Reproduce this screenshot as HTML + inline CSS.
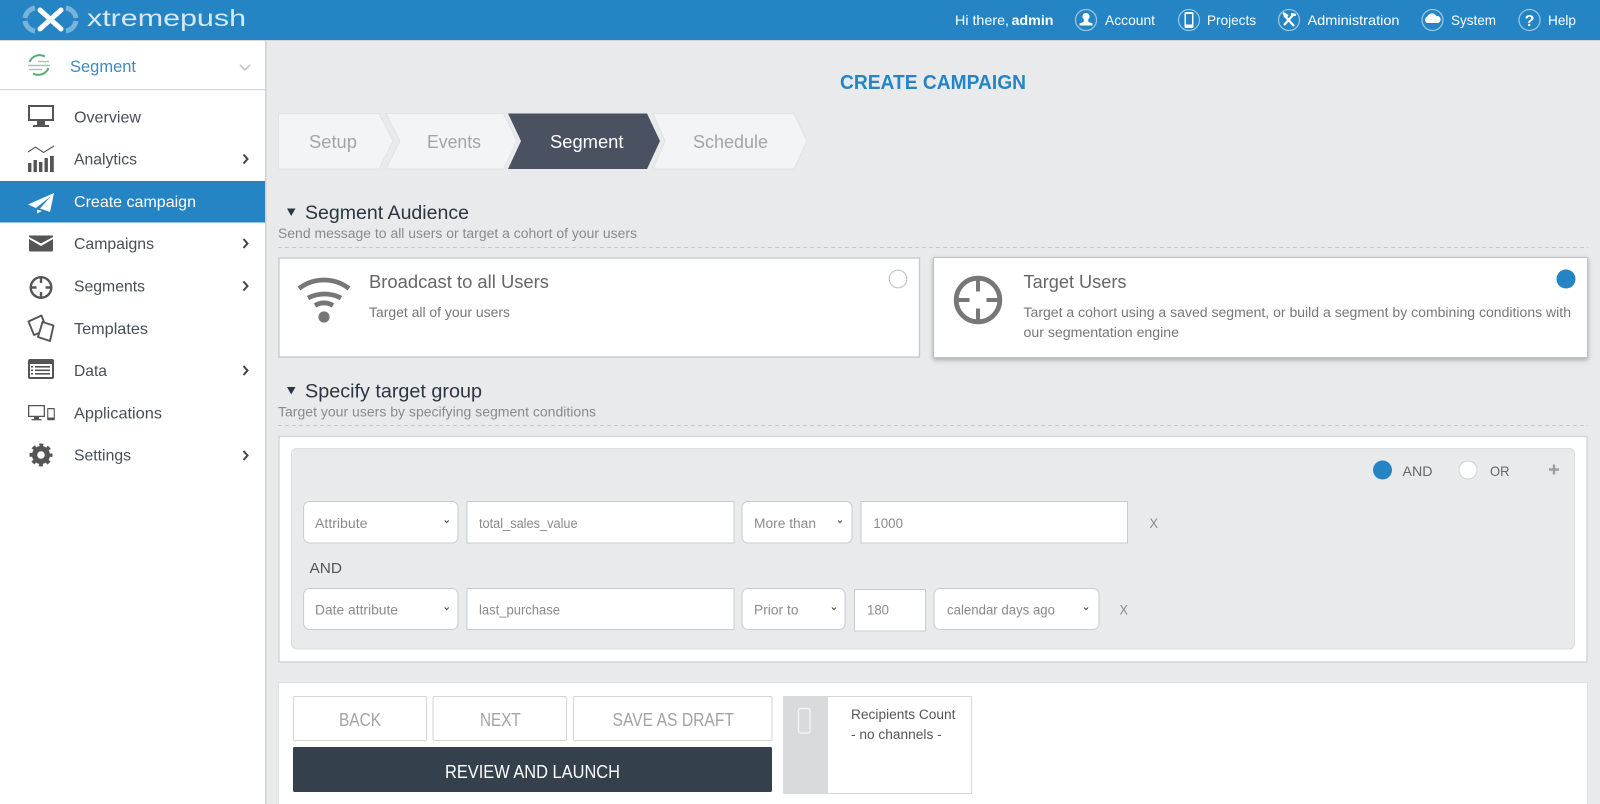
<!DOCTYPE html>
<html lang="en">
<head>
<meta charset="utf-8">
<title>Create Campaign - xtremepush</title>
<style>
html,body{margin:0;padding:0;width:1600px;height:804px;overflow:hidden;background:#e9eaec}
svg{display:block}
text{font-family:"Liberation Sans","DejaVu Sans",sans-serif}
.m{font-size:16px;fill:#484e56}
.h{font-size:14px;fill:#fff}
.f{font-size:13.5px;fill:#8a8a8a}
.b{font-size:18px;fill:#a3a3a3;font-weight:400}
.st{font-size:18.5px;fill:#a2a4a7}
</style>
</head>
<body>
<svg width="1600" height="804" viewBox="0 0 1600 804" xmlns="http://www.w3.org/2000/svg">
<defs>
<filter id="sh" x="-5%" y="-10%" width="110%" height="125%"><feDropShadow dx="0" dy="2" stdDeviation="2.5" flood-color="#000" flood-opacity=".28"/></filter>
</defs>
<rect width="1600" height="804" fill="#e9eaec"/>

<!-- Header -->
<rect width="1600" height="40" fill="#2585c4"/>
<rect y="40" width="1600" height="1" fill="#d4d7da"/>
<g fill="none" stroke="#fff" stroke-opacity=".38" stroke-width="5">
<path d="M35 8 A12 12 0 0 0 25 18"/><path d="M25 21 A12 12 0 0 0 35 31"/>
<path d="M66 8 A12 12 0 0 1 76 18"/><path d="M76 21 A12 12 0 0 1 66 31"/>
</g>
<path d="M40 10 L61 29 M61 10 L40 29" stroke="#fff" stroke-width="5" stroke-linecap="round" fill="none"/>
<text x="87" y="26" font-size="23" fill="#d6e8f4" textLength="159" lengthAdjust="spacingAndGlyphs">xtremepush</text>

<text class="h" x="955" y="25" textLength="54" lengthAdjust="spacingAndGlyphs">Hi there,</text>
<text class="h" x="1011.5" y="25" font-weight="700" textLength="42" lengthAdjust="spacingAndGlyphs">admin</text>
<g fill="none" stroke="#fff" stroke-opacity=".55" stroke-width="1.2">
<circle cx="1086" cy="20" r="10.5"/><circle cx="1189" cy="20" r="10.5"/><circle cx="1289" cy="20" r="10.5"/><circle cx="1432.5" cy="20" r="10.5"/><circle cx="1529.5" cy="20" r="10.5"/>
</g>
<g fill="#fff">
<circle cx="1086" cy="16.5" r="3.6"/><path d="M1084 19 h4 l.5 3 l4 1.5 v2 h-13 v-2 l4 -1.5z"/>
<path d="M1184.5 13.5 a1.5 1.5 0 0 1 1.5 -1.5 h6 a1.5 1.5 0 0 1 1.5 1.5 v13 a1.5 1.5 0 0 1 -1.5 1.5 h-6 a1.5 1.5 0 0 1 -1.5 -1.5z M1186 14 v10.5 h6 v-10.5z" fill-rule="evenodd"/>
<path d="M1427 23 a3.6 3.6 0 0 1 .5 -6.6 a4.8 4.8 0 0 1 8.8 -.3 a3.5 3.5 0 0 1 1.7 6.9z"/>
</g>
<path d="M1284 15 L1294 26 M1294 14 L1284 25" stroke="#fff" stroke-width="2.4" fill="none"/>
<path d="M1283 13 l5 3 M1291 14 l5 1" stroke="#fff" stroke-width="2.4" fill="none"/>
<text x="1529.5" y="26" text-anchor="middle" font-size="16" font-weight="700" fill="#fff">?</text>
<text class="h" x="1105" y="25" textLength="50" lengthAdjust="spacingAndGlyphs">Account</text>
<text class="h" x="1207" y="25" textLength="49" lengthAdjust="spacingAndGlyphs">Projects</text>
<text class="h" x="1307.5" y="25" textLength="92" lengthAdjust="spacingAndGlyphs">Administration</text>
<text class="h" x="1451" y="25" textLength="45" lengthAdjust="spacingAndGlyphs">System</text>
<text class="h" x="1548" y="25" textLength="28" lengthAdjust="spacingAndGlyphs">Help</text>

<!-- Sidebar -->
<rect y="41" width="265" height="763" fill="#fff"/>
<rect x="265" y="41" width="1.5" height="763" fill="#cfd1d3"/>
<rect y="89" width="265" height="1.2" fill="#d5d7d9"/>
<g fill="none" stroke-width="2">
<path d="M45 56.5 A11 11 0 0 0 29.500 62" stroke="#55ad76"/>
<path d="M33 73.500 A11 11 0 0 0 48.500 68" stroke="#55ad76"/>
<path d="M38 61.500 H49" stroke="#a9c2b2" stroke-width="1.400"/>
<path d="M28 65.500 H50" stroke="#a9c2b2" stroke-width="1.600"/>
<path d="M29 69.500 H42" stroke="#a9c2b2" stroke-width="1.400"/>
</g>
<text x="70" y="72" font-size="16.5" fill="#3f8cba" textLength="66" lengthAdjust="spacingAndGlyphs">Segment</text>
<path d="M240 65 l5 5 l5 -5" fill="none" stroke="#c3c5c7" stroke-width="1.6"/>

<!-- Menu icons -->
<g fill="#555">
<path fill-rule="evenodd" d="M28 105 H54 V121 H28z M30 107 V119 H52 V107z"/>
<rect x="37" y="121" width="8" height="4"/><rect x="33" y="125" width="16" height="2"/>
<rect x="28" y="163" width="3.4" height="9"/><rect x="33.5" y="160" width="3.4" height="12"/><rect x="39" y="162" width="3.4" height="10"/><rect x="44.5" y="158" width="3.4" height="14"/><rect x="50" y="156" width="3.8" height="16"/>
</g>
<path d="M28 152 L35.5 147 L43.5 152.5 L54 146" fill="none" stroke="#555" stroke-width="1.1"/>

<rect y="181" width="265" height="41.5" fill="#2585c4"/>
<path d="M54 193 L28 204.5 L36 208 L51 196 L40 208.5 L50 212z" fill="#fff"/>
<path d="M37 209.500 L37 213.500 L42 211z" fill="#fff"/>

<path d="M29 235.5 H53 V237 L41 243.5 L29 237z" fill="#555"/>
<path d="M29 239 L41 246 L53 239 V250 a1.5 1.5 0 0 1 -1.5 1.5 H30.500 a1.500 1.500 0 0 1 -1.500 -1.500z" fill="#555"/>

<circle cx="41" cy="287.500" r="10.300" fill="none" stroke="#555" stroke-width="2.400"/>
<path d="M41 277 v6 M41 292 v6 M30.500 287.500 h6 M45.500 287.500 h6" stroke="#555" stroke-width="2.400"/>

<g fill="#fff" stroke="#555" stroke-width="1.900" stroke-linejoin="round">
<path d="M28.500 321.500 L41.500 315.500 L47 330 L34 335z"/>
<path d="M42.500 322 L53.500 325.500 L50 341 L38 337z"/>
</g>

<rect x="28" y="359" width="26" height="20" rx="2" fill="#555"/>
<rect x="30" y="364" width="22" height="13" fill="#fff"/>
<g fill="#555"><rect x="31" y="366" width="2" height="1.600"/><rect x="31" y="369.500" width="2" height="1.600"/><rect x="31" y="373" width="2" height="1.600"/><rect x="35" y="366" width="15" height="1.600"/><rect x="35" y="369.500" width="15" height="1.600"/><rect x="35" y="373" width="15" height="1.600"/></g>

<g fill="#555">
<path fill-rule="evenodd" d="M28 405 H45 V417 H28z M29.300 406.300 V415.700 H43.700 V406.300z"/>
<rect x="34" y="417" width="5" height="2.500"/><rect x="31.500" y="419" width="10" height="1.300"/>
<path fill-rule="evenodd" d="M48 408 H54 a.8 .8 0 0 1 .8 .8 V419.500 a.8 .8 0 0 1 -.8 .8 H48 a.8 .8 0 0 1 -.8 -.8 V408.800 a.8 .8 0 0 1 .8 -.8z M48.300 409.300 V417.500 H53.700 V409.300z"/>
</g>

<circle cx="41" cy="455" r="6.400" fill="none" stroke="#555" stroke-width="5.200"/>
<circle cx="41" cy="455" r="10" fill="none" stroke="#555" stroke-width="3" stroke-dasharray="3.930 3.930" stroke-dashoffset="2"/>

<!-- Menu text -->
<text class="m" x="74" y="122.500" textLength="67" lengthAdjust="spacingAndGlyphs">Overview</text>
<text class="m" x="74" y="164.500" textLength="63" lengthAdjust="spacingAndGlyphs">Analytics</text>
<text class="m" x="74" y="207" style="fill:#fff" textLength="122" lengthAdjust="spacingAndGlyphs">Create campaign</text>
<text class="m" x="74" y="249" textLength="80" lengthAdjust="spacingAndGlyphs">Campaigns</text>
<text class="m" x="74" y="291.500" textLength="71" lengthAdjust="spacingAndGlyphs">Segments</text>
<text class="m" x="74" y="334" textLength="74" lengthAdjust="spacingAndGlyphs">Templates</text>
<text class="m" x="74" y="376" textLength="33" lengthAdjust="spacingAndGlyphs">Data</text>
<text class="m" x="74" y="418.500" textLength="88" lengthAdjust="spacingAndGlyphs">Applications</text>
<text class="m" x="74" y="460.500" textLength="57" lengthAdjust="spacingAndGlyphs">Settings</text>
<g fill="none" stroke="#444" stroke-width="2">
<path d="M243.500 154.500 l4 4.500 l-4 4.500"/>
<path d="M243.500 239 l4 4.500 l-4 4.500"/>
<path d="M243.500 281.500 l4 4.500 l-4 4.500"/>
<path d="M243.500 366 l4 4.500 l-4 4.500"/>
<path d="M243.500 451 l4 4.500 l-4 4.500"/>
</g>

<!-- Title -->
<text x="840" y="89" font-size="20" font-weight="700" fill="#2585c4" textLength="186" lengthAdjust="spacingAndGlyphs">CREATE CAMPAIGN</text>

<!-- Steps -->
<g fill="#f3f4f6" stroke="#e1e2e4" stroke-width="1">
<path d="M278.500 113.500 H379 L393 141 L379 169 H278.500z"/>
<path d="M386 113.500 H503.500 L517 141 L503.500 169 H386 L400 141z"/>
<path d="M653 113.500 H794 L807 141 L794 169 H653 L665 141z"/>
</g>
<path d="M508 113.500 H647 L660 141 L647 169 H508 L521 141z" fill="#4a5161"/>
<text class="st" x="309" y="148" textLength="48" lengthAdjust="spacingAndGlyphs">Setup</text>
<text class="st" x="427" y="148" textLength="54" lengthAdjust="spacingAndGlyphs">Events</text>
<text class="st" x="550" y="148" style="fill:#fff" textLength="73.500" lengthAdjust="spacingAndGlyphs">Segment</text>
<text class="st" x="693" y="148" textLength="75" lengthAdjust="spacingAndGlyphs">Schedule</text>

<!-- Segment Audience -->
<path d="M287 208.500 H295.500 L291.200 216z" fill="#2c3540"/>
<text x="305" y="219" font-size="19" fill="#2c3540" textLength="164" lengthAdjust="spacingAndGlyphs">Segment Audience</text>
<text class="f" x="278" y="238" textLength="359" lengthAdjust="spacingAndGlyphs">Send message to all users or target a cohort of your users</text>
<path d="M278 247.500 H1588" stroke="#c8c9cb" stroke-width="1" stroke-dasharray="4 3"/>

<rect x="279" y="258" width="640.500" height="99" fill="#fff" stroke="#c8cacc" stroke-width="1.400"/>
<g fill="none" stroke="#777" stroke-width="4.800">
<path d="M299 288.500 A41 41 0 0 1 349 288.500"/>
<path d="M308 298 A36 36 0 0 1 341 298"/>
<path d="M315 305.500 A17 17 0 0 1 333 305.500"/>
</g>
<circle cx="324" cy="317" r="5.600" fill="#777"/>
<text x="369" y="288" font-size="18" fill="#666" textLength="180" lengthAdjust="spacingAndGlyphs">Broadcast to all Users</text>
<text x="369" y="317" font-size="13.500" fill="#777" textLength="141" lengthAdjust="spacingAndGlyphs">Target all of your users</text>
<circle cx="898" cy="279" r="8.800" fill="#fff" stroke="#c5c7c9" stroke-width="1.200"/>

<rect x="933.500" y="257.500" width="654" height="100" fill="#fff" stroke="#c0c2c4" stroke-width="1" filter="url(#sh)"/>
<circle cx="978" cy="300" r="21.800" fill="none" stroke="#777" stroke-width="4.800"/>
<path d="M978 279 v12.500 M978 308.500 v12.500 M957 300 h12.500 M986.500 300 h12.500" stroke="#777" stroke-width="4"/>
<text x="1023.500" y="288" font-size="18" fill="#666" textLength="103" lengthAdjust="spacingAndGlyphs">Target Users</text>
<text x="1023.500" y="317" font-size="13.500" fill="#777" textLength="547.500" lengthAdjust="spacingAndGlyphs">Target a cohort using a saved segment, or build a segment by combining conditions with</text>
<text x="1023.500" y="337" font-size="13.500" fill="#777" textLength="155.500" lengthAdjust="spacingAndGlyphs">our segmentation engine</text>
<circle cx="1566" cy="279" r="9.500" fill="#2585c4"/>

<!-- Specify target group -->
<path d="M287 387 H295.500 L291.200 394.500z" fill="#2c3540"/>
<text x="305" y="397.500" font-size="19" fill="#2c3540" textLength="177" lengthAdjust="spacingAndGlyphs">Specify target group</text>
<text class="f" x="278" y="416.500" textLength="318" lengthAdjust="spacingAndGlyphs">Target your users by specifying segment conditions</text>
<path d="M278 425.500 H1588" stroke="#c8c9cb" stroke-width="1" stroke-dasharray="4 3"/>

<rect x="279" y="436.500" width="1308" height="225.500" fill="#fff" stroke="#d2d4d6" stroke-width="1.400"/>
<rect x="291.500" y="448.500" width="1283" height="200.500" rx="5" fill="#e9eaec" stroke="#dcdddf" stroke-width="1"/>

<g fill="#fff" stroke="#c9cbcd" stroke-width="1">
<rect x="303.600" y="501.500" width="154.400" height="41.500" rx="6"/>
<rect x="467" y="501.500" width="267" height="41.500"/>
<rect x="742" y="501.500" width="110" height="41.500" rx="6"/>
<rect x="861" y="501.500" width="266.500" height="41.500"/>
<rect x="303.600" y="588.500" width="154.400" height="41" rx="6"/>
<rect x="467" y="588.500" width="267" height="41"/>
<rect x="742" y="588.500" width="103" height="41" rx="6"/>
<rect x="854.500" y="589.500" width="71" height="41.500"/>
<rect x="934" y="588.500" width="165" height="41" rx="6"/>
</g>
<g fill="none" stroke="#555" stroke-width="1.200">
<path d="M444.700 520.500 l2 2 l2 -2"/><path d="M838 520.500 l2 2 l2 -2"/>
<path d="M444.700 607.500 l2 2 l2 -2"/><path d="M832 607.500 l2 2 l2 -2"/><path d="M1084 607.500 l2 2 l2 -2"/>
</g>
<text class="f" x="315" y="528" textLength="52.500" lengthAdjust="spacingAndGlyphs">Attribute</text>
<text class="f" x="479" y="528" textLength="98.600" lengthAdjust="spacingAndGlyphs">total_sales_value</text>
<text class="f" x="754" y="528" textLength="62" lengthAdjust="spacingAndGlyphs">More than</text>
<text class="f" x="873.400" y="528" textLength="29.600" lengthAdjust="spacingAndGlyphs">1000</text>
<text x="1149.500" y="528" font-size="14" fill="#8a8a8a" textLength="8.500" lengthAdjust="spacingAndGlyphs">X</text>
<text x="309.500" y="573" font-size="15" fill="#555" textLength="32.500" lengthAdjust="spacingAndGlyphs">AND</text>
<text class="f" x="315" y="614.500" textLength="83" lengthAdjust="spacingAndGlyphs">Date attribute</text>
<text class="f" x="479" y="614.500" textLength="81" lengthAdjust="spacingAndGlyphs">last_purchase</text>
<text class="f" x="754" y="614.500" textLength="44.500" lengthAdjust="spacingAndGlyphs">Prior to</text>
<text class="f" x="867" y="614.500" textLength="22" lengthAdjust="spacingAndGlyphs">180</text>
<text class="f" x="947" y="614.500" textLength="108" lengthAdjust="spacingAndGlyphs">calendar days ago</text>
<text x="1119.500" y="614.500" font-size="14" fill="#8a8a8a" textLength="8.500" lengthAdjust="spacingAndGlyphs">X</text>

<circle cx="1382.500" cy="470" r="9.500" fill="#2585c4"/>
<text x="1402.500" y="476" font-size="14" fill="#666" textLength="30" lengthAdjust="spacingAndGlyphs">AND</text>
<circle cx="1468" cy="470" r="9" fill="#fff" stroke="#d0d2d4" stroke-width="1"/>
<text x="1490" y="476" font-size="14" fill="#666" textLength="19.500" lengthAdjust="spacingAndGlyphs">OR</text>
<path d="M1549 469.500 h10 M1554 464.500 v10" stroke="#9b9da0" stroke-width="2.400"/>

<!-- Bottom actions -->
<rect x="278.500" y="682.500" width="1309" height="122" fill="#fff" stroke="#dfe0e2" stroke-width="1"/>
<g fill="#fff" stroke="#d2d4d6" stroke-width="1">
<rect x="293.500" y="696.500" width="133" height="44" rx="1.500"/>
<rect x="433" y="696.500" width="133.500" height="44" rx="1.500"/>
<rect x="573.500" y="696.500" width="198.500" height="44" rx="1.500"/>
</g>
<text class="b" x="339" y="726" textLength="42" lengthAdjust="spacingAndGlyphs">BACK</text>
<text class="b" x="480" y="726" textLength="40.700" lengthAdjust="spacingAndGlyphs">NEXT</text>
<text class="b" x="612.500" y="726" textLength="121.500" lengthAdjust="spacingAndGlyphs">SAVE AS DRAFT</text>
<rect x="293" y="747" width="479" height="45" rx="1.500" fill="#34404b"/>
<text x="445" y="778" font-size="18" fill="#fff" textLength="175" lengthAdjust="spacingAndGlyphs">REVIEW AND LAUNCH</text>

<rect x="783.500" y="696.500" width="188" height="97" fill="#fff" stroke="#d5d7d9" stroke-width="1"/>
<rect x="783" y="696" width="45" height="98" fill="#d9dadc"/>
<rect x="798.500" y="708.500" width="11.500" height="24.500" rx="2" fill="none" stroke="#f2f3f4" stroke-width="1.400"/>
<text x="851" y="719" font-size="13.500" fill="#555" textLength="104.500" lengthAdjust="spacingAndGlyphs">Recipients Count</text>
<text x="851" y="739" font-size="13.500" fill="#555" textLength="90.700" lengthAdjust="spacingAndGlyphs">- no channels -</text>
</svg>
</body>
</html>
